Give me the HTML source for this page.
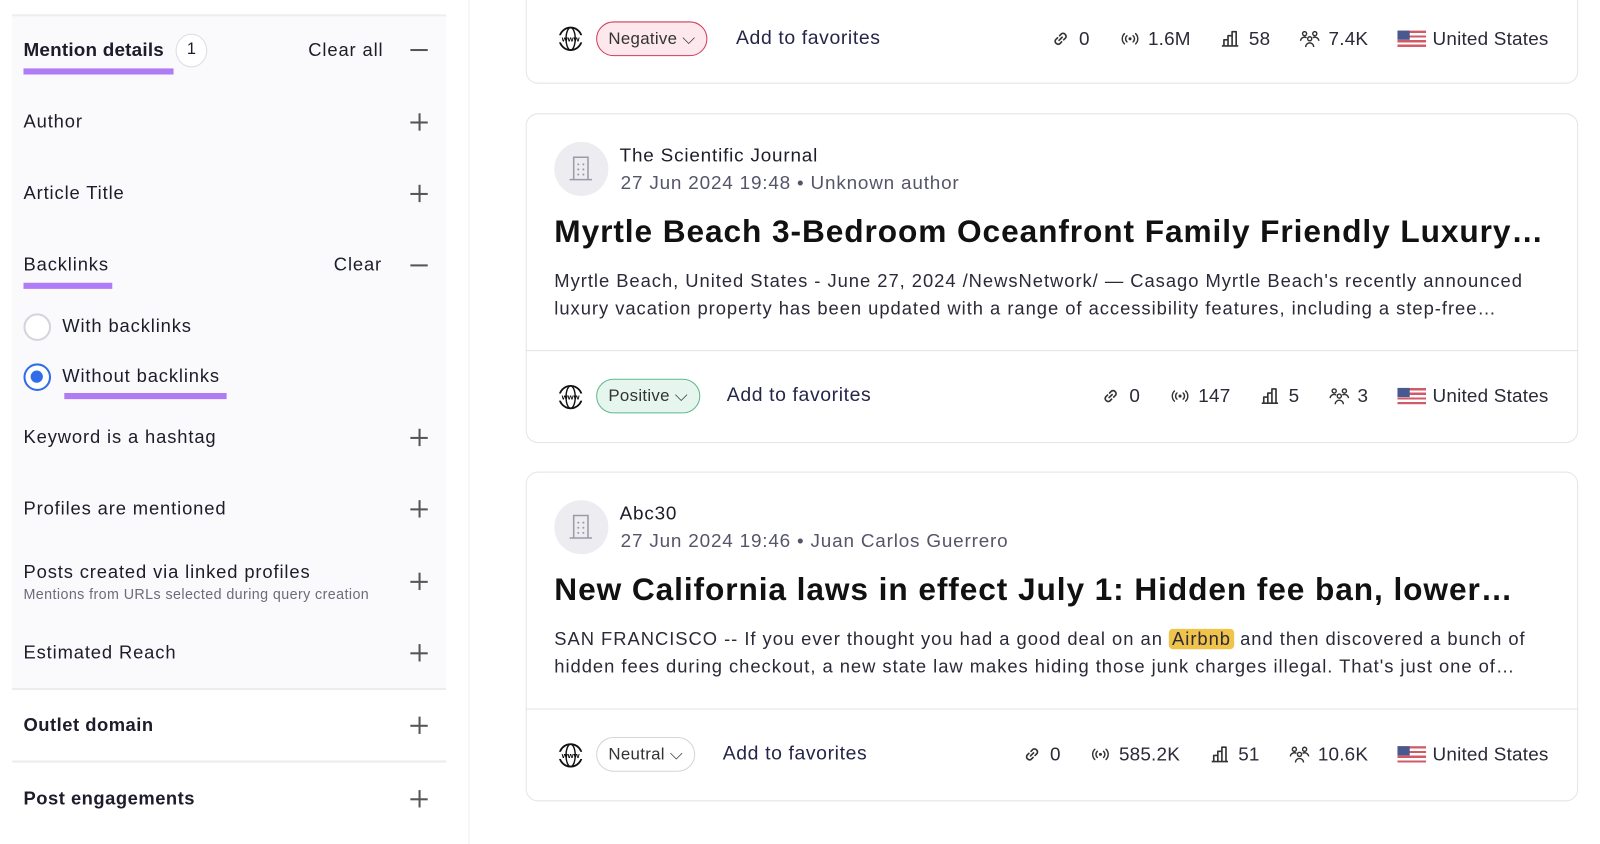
<!DOCTYPE html>
<html><head><meta charset="utf-8"><style>
*{margin:0;padding:0;box-sizing:border-box}
body{width:1600px;height:827px;background:#fff;font-family:"Liberation Sans",sans-serif;color:#1c1c2b;position:relative;overflow:hidden}
#w{position:absolute;left:0;top:0;width:1568px;height:810px;transform:scale(1.0208);transform-origin:0 0}
.a{position:absolute;white-space:nowrap}
.panel{position:absolute;left:12px;top:14px;width:425px;height:661px;background:#fafafc;border-top:2px solid #eeeef2}
.lbl{font-size:18px;color:#1c1c2b;letter-spacing:0.85px}
.plus{position:absolute;left:402px;width:17px;height:17px}
.plus:before{content:"";position:absolute;left:0;top:8px;width:17px;height:1.5px;background:#555}
.plus.p:after{content:"";position:absolute;left:8px;top:0;width:1.5px;height:17px;background:#555}
.ul{position:absolute;height:6px;background:#b07cf6}
.hr{position:absolute;left:12px;width:425px;height:2px;background:#ebebf0}
.card{position:absolute;left:515px;width:1031px;border:1px solid #e4e4ea;border-radius:12px;background:#fff}
.div{position:absolute;left:515px;width:1031px;height:1px;background:#e4e4ea}
.title{font-size:31px;font-weight:bold;color:#111;letter-spacing:0.9px}
.body{font-size:18px;line-height:27px;color:#2a2a38;letter-spacing:0.95px}
.pill{position:absolute;height:34px;border-radius:17px;font-size:16.5px;padding:0 11px;line-height:32px;letter-spacing:0.3px}
.fav{font-size:19px;color:#25254a;letter-spacing:0.6px}
.st{font-size:18.5px;color:#2a2a38;right:51px;display:flex;align-items:center;letter-spacing:0.2px}
.st svg{margin-right:8px}
.st .g{margin-right:29px;display:flex;align-items:center}
.flag{display:inline-block;width:28px;height:16px;background:repeating-linear-gradient(#d05a66 0 2.3px,#fff 2.3px 4.6px);position:relative;margin-right:6px}
.flag:before{content:"";position:absolute;left:0;top:0;width:12px;height:9px;background:#4a5890}
.av{position:absolute;width:53px;height:53px;border-radius:50%;background:#ececf1}
.meta{font-size:18.5px;letter-spacing:0.8px}
</style></head><body>
<svg width="0" height="0" style="position:absolute"><defs>
<symbol id="www" viewBox="0 0 26 26"><circle cx="13" cy="13" r="11" fill="none" stroke="#111" stroke-width="1.8"/><rect x="0" y="9.5" width="26" height="7" fill="#fff"/><text x="13" y="15.6" font-size="7.5" font-weight="bold" text-anchor="middle" font-family="Liberation Sans">www</text><ellipse cx="13" cy="13" rx="4.5" ry="11" fill="none" stroke="#111" stroke-width="1.4"/></symbol>
<symbol id="lnk" viewBox="0 0 20 20"><path d="M8.5 11.5l3-3M7 9L5 11a3 3 0 004 4l2-2M13 11l2-2a3 3 0 00-4-4L9 7" fill="none" stroke="#333" stroke-width="1.6" stroke-linecap="round"/></symbol>
<symbol id="rch" viewBox="0 0 20 20"><circle cx="10" cy="10" r="1.5" fill="#333"/><path d="M7 7a4 4 0 000 6M13 7a4 4 0 010 6M4.5 5a7 7 0 000 10M15.5 5a7 7 0 010 10" fill="none" stroke="#333" stroke-width="1.4" stroke-linecap="round"/></symbol>
<symbol id="bar" viewBox="0 0 20 20"><path d="M2 17h16M4 17v-6h4v6M8 17V7h4v10M12 17V3h4v14" fill="none" stroke="#333" stroke-width="1.6" stroke-linejoin="round"/></symbol>
<symbol id="ppl" viewBox="0 0 20 20"><circle cx="10" cy="10" r="2" fill="none" stroke="#333" stroke-width="1.4"/><circle cx="5" cy="5" r="2" fill="none" stroke="#333" stroke-width="1.4"/><circle cx="15" cy="5" r="2" fill="none" stroke="#333" stroke-width="1.4"/><path d="M6 18a4 4 0 018 0M1 12a4 4 0 016-3M19 12a4 4 0 00-6-3" fill="none" stroke="#333" stroke-width="1.4"/></symbol>
<symbol id="bld" viewBox="0 0 30 30"><path d="M8 4h14v22H8zM4 26h22" fill="none" stroke="#9a9aaa" stroke-width="1.5"/><g fill="#9a9aaa"><circle cx="12.5" cy="11" r="1"/><circle cx="17.5" cy="11" r="1"/><circle cx="12.5" cy="16" r="1"/><circle cx="17.5" cy="16" r="1"/><circle cx="12.5" cy="21" r="1"/><circle cx="17.5" cy="21" r="1"/></g></symbol>
</defs></svg>
<div id="w">
<div style="position:absolute;left:459px;top:0;width:1px;height:827px;background:#eeeef2"></div>
<div class="panel"></div>
<div class="a" style="left:23px;top:38px;font-size:18.5px;font-weight:bold;letter-spacing:0.2px">Mention details</div>
<div class="a" style="left:172px;top:33px;width:31px;height:33px;border:1.5px solid #dcdce3;border-radius:50%;text-align:center;line-height:30px;font-size:16px;background:#fff">1</div>
<div class="ul" style="left:23px;top:67px;width:147px"></div>
<div class="a lbl" style="left:302px;top:39px">Clear all</div>
<div class="plus" style="top:40px"></div>
<div class="a lbl" style="left:23px;top:109px">Author</div><div class="plus p" style="top:111px"></div>
<div class="a lbl" style="left:23px;top:179px">Article Title</div><div class="plus p" style="top:181px"></div>
<div class="a lbl" style="left:23px;top:249px">Backlinks</div>
<div class="ul" style="left:23px;top:277px;width:87px"></div>
<div class="a lbl" style="left:327px;top:249px">Clear</div><div class="plus" style="top:251px"></div>
<div class="a" style="left:23px;top:307px;width:27px;height:27px;border:2px solid #d4d4dc;border-radius:50%;background:#fff"></div>
<div class="a lbl" style="left:61px;top:309px">With backlinks</div>
<div class="a" style="left:23px;top:356px;width:27px;height:27px;border:2.5px solid #2f6ee8;border-radius:50%;background:#fff"><div style="position:absolute;left:5px;top:5px;width:12px;height:12px;border-radius:50%;background:#2f6ee8"></div></div>
<div class="a lbl" style="left:61px;top:358px">Without backlinks</div>
<div class="ul" style="left:63px;top:385px;width:159px"></div>
<div class="a lbl" style="left:23px;top:418px">Keyword is a hashtag</div><div class="plus p" style="top:420px"></div>
<div class="a lbl" style="left:23px;top:488px">Profiles are mentioned</div><div class="plus p" style="top:490px"></div>
<div class="a lbl" style="left:23px;top:550px">Posts created via linked profiles</div>
<div class="a" style="left:23px;top:574px;font-size:14px;color:#6b6b7b;letter-spacing:0.4px">Mentions from URLs selected during query creation</div>
<div class="plus p" style="top:561px"></div>
<div class="a lbl" style="left:23px;top:629px">Estimated Reach</div><div class="plus p" style="top:631px"></div>
<div class="hr" style="top:674px"></div>
<div class="a lbl" style="left:23px;top:700px;font-weight:bold;letter-spacing:0.5px">Outlet domain</div><div class="plus p" style="top:702px"></div>
<div class="hr" style="top:745px"></div>
<div class="a lbl" style="left:23px;top:772px;font-weight:bold;letter-spacing:0.5px">Post engagements</div><div class="plus p" style="top:774px"></div>

<div class="card" style="top:-20px;height:102px"></div>
<svg class="a" style="left:546px;top:25px" width="26" height="26"><use href="#www"/></svg>
<div class="pill" style="left:584px;top:21px;border:1.5px solid #d03a5b;background:#fde8ee;color:#333">Negative ⌵</div>
<div class="a fav" style="left:721px;top:27px">Add to favorites</div>
<div class="a st" style="top:27px"><span class="g"><svg width="20" height="20"><use href="#lnk"/></svg>0</span><span class="g"><svg width="20" height="20"><use href="#rch"/></svg>1.6M</span><span class="g"><svg width="20" height="20"><use href="#bar"/></svg>58</span><span class="g"><svg width="20" height="20"><use href="#ppl"/></svg>7.4K</span><span class="flag"></span>United States</div>

<div class="card" style="top:111px;height:323px"></div>
<div class="av" style="left:543px;top:139px"><svg style="position:absolute;left:11px;top:11px" width="30" height="30"><use href="#bld"/></svg></div>
<div class="a meta" style="left:607px;top:141px">The Scientific Journal</div>
<div class="a meta" style="left:608px;top:168px;color:#55556a">27 Jun 2024 19:48 • Unknown author</div>
<div class="a title" style="left:543px;top:209px">Myrtle Beach 3-Bedroom Oceanfront Family Friendly Luxury…</div>
<div class="a body" style="left:543px;top:262px">Myrtle Beach, United States - June 27, 2024 /NewsNetwork/ — Casago Myrtle Beach's recently announced<br>luxury vacation property has been updated with a range of accessibility features, including a step-free…</div>
<div class="div" style="top:343px"></div>
<svg class="a" style="left:546px;top:376px" width="26" height="26"><use href="#www"/></svg>
<div class="pill" style="left:584px;top:371px;border:1.5px solid #5cb98a;background:#e6f6ee;color:#333">Positive ⌵</div>
<div class="a fav" style="left:712px;top:377px">Add to favorites</div>
<div class="a st" style="top:377px"><span class="g"><svg width="20" height="20"><use href="#lnk"/></svg>0</span><span class="g"><svg width="20" height="20"><use href="#rch"/></svg>147</span><span class="g"><svg width="20" height="20"><use href="#bar"/></svg>5</span><span class="g"><svg width="20" height="20"><use href="#ppl"/></svg>3</span><span class="flag"></span>United States</div>

<div class="card" style="top:462px;height:323px"></div>
<div class="av" style="left:543px;top:490px"><svg style="position:absolute;left:11px;top:11px" width="30" height="30"><use href="#bld"/></svg></div>
<div class="a meta" style="left:607px;top:492px">Abc30</div>
<div class="a meta" style="left:608px;top:519px;color:#55556a">27 Jun 2024 19:46 • Juan Carlos Guerrero</div>
<div class="a title" style="left:543px;top:560px">New California laws in effect July 1: Hidden fee ban, lower…</div>
<div class="a body" style="left:543px;top:613px">SAN FRANCISCO -- If you ever thought you had a good deal on an <span style="background:#f0c34a;border-radius:4px;padding:0 3px">Airbnb</span> and then discovered a bunch of<br>hidden fees during checkout, a new state law makes hiding those junk charges illegal. That's just one of…</div>
<div class="div" style="top:694px"></div>
<svg class="a" style="left:546px;top:727px" width="26" height="26"><use href="#www"/></svg>
<div class="pill" style="left:584px;top:722px;border:1.5px solid #d4d4dc;background:#fff;color:#333">Neutral ⌵</div>
<div class="a fav" style="left:708px;top:728px">Add to favorites</div>
<div class="a st" style="top:728px"><span class="g"><svg width="20" height="20"><use href="#lnk"/></svg>0</span><span class="g"><svg width="20" height="20"><use href="#rch"/></svg>585.2K</span><span class="g"><svg width="20" height="20"><use href="#bar"/></svg>51</span><span class="g"><svg width="20" height="20"><use href="#ppl"/></svg>10.6K</span><span class="flag"></span>United States</div>
</div>
</body></html>
